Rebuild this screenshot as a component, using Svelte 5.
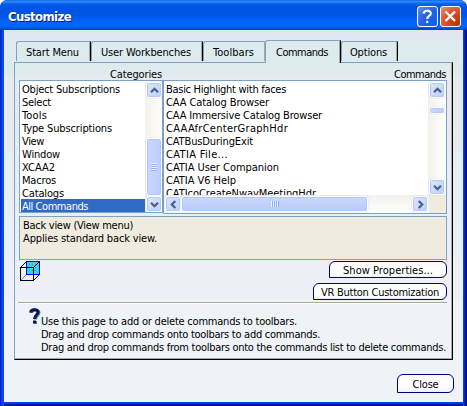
<script>
  const tabs = [
    { label: 'Start Menu', w: 53, box: 75, pad: 9 },
    { label: 'User Workbenches', w: 90, box: 112, pad: 9 },
    { label: 'Toolbars', w: 41, box: 62, pad: 9 },
    { label: 'Commands', w: 52, box: 76, pad: 10, active: true },
    { label: 'Options', w: 37, box: 57, pad: 8 }
  ];
  const categories = [
    ['Object Subscriptions', 98], ['Select', 29], ['Tools', 25], ['Type Subscriptions', 90],
    ['View', 22], ['Window', 38], ['XCAA2', 33], ['Macros', 34], ['Catalogs', 42], ['All Commands', 66]
  ];
  const commands = [
    ['Basic Highlight with faces', 120], ['CAA Catalog Browser', 103],
    ['CAA Immersive Catalog Browser', 156], ['CAAAfrCenterGraphHdr', 122],
    ['CATBusDuringExit', 87], ['CATIA File...', 62], ['CATIA User Companion', 113],
    ['CATIA V6 Help', 70], ['CATIcoCreateNwayMeetingHdr', 150]
  ];
  const help = [
    ['Use this page to add or delete commands to toolbars.', 256],
    ['Drag and drop commands onto toolbars to add commands.', 279],
    ['Drag and drop commands from toolbars onto the commands list to delete commands.', 405]
  ];
  // Spreads the tracking so that a label fills its design width.
  function fit(node, width) {
    const natural = node.getBoundingClientRect().width;
    node.style.letterSpacing = (width - natural) / node.textContent.length + 'px';
  }
  const rotation = { up: 0, right: 90, down: 180, left: 270 };
</script>

{#snippet t(text, w)}<span class="t" use:fit={w}>{text}</span>{/snippet}

{#snippet arrow(dir)}
  <div class="arrow">
    <svg width="9" height="9" viewBox="0 0 9 9"><path d="M1 6.3 4.5 2.8 8 6.3" transform="rotate({rotation[dir]} 4.5 4.5)" fill="none" stroke="#4d6185" stroke-width="2.3" /></svg>
  </div>
{/snippet}

<div class="window">
  <header>
    <span class="title" use:fit={63}>Customize</span>
    <div class="cap">
      <svg width="21" height="21" viewBox="0 0 21 21"><path d="M6.7 7.8C6.7 3.6 13.8 3.8 13.8 7.4 13.8 10 10.2 9.9 10.2 13M10.2 14.7V17" fill="none" stroke="#fff" stroke-width="2.1" /></svg>
    </div>
    <div class="cap red">
      <svg width="21" height="21" viewBox="0 0 21 21"><path d="M5.5 5.5 15 15M15 5.5 5.5 15" fill="none" stroke="#fff" stroke-width="2.3" /></svg>
    </div>
  </header>

  <main>
    <nav>
      {#each tabs as tab}
        <div class="tab" class:active={tab.active} style="width:{tab.box}px;padding-left:{tab.pad}px">{@render t(tab.label, tab.w)}</div>
      {/each}
    </nav>
    <section class="page">
      <div class="heads">{@render t('Categories', 52)}{@render t('Commands', 52)}</div>
      <div class="lists">
        <div class="list cats">
          <div class="rows">
            {#each categories as [name, w], i}
              <div class="row" class:selected={i === 9}>{@render t(name, w)}</div>
            {/each}
          </div>
          <div class="vbar">
            {@render arrow('up')}
            <div class="space"></div>
            <div class="thumb tall"><i class="grip"></i></div>
            {@render arrow('down')}
          </div>
        </div>
        <div class="list cmds">
          <div class="upper">
            <div class="rows">
              {#each commands as [name, w]}
                <div class="row">{@render t(name, w)}</div>
              {/each}
            </div>
            <div class="vbar">
              {@render arrow('up')}
              <div class="gap"></div>
              <div class="thumb short"></div>
              <div class="space"></div>
              {@render arrow('down')}
            </div>
          </div>
          <div class="lower">
            <div class="hbar">
              {@render arrow('left')}
              <div class="thumb wide"><i class="grip side"></i></div>
              <div class="space"></div>
              {@render arrow('right')}
            </div>
          </div>
        </div>
      </div>

      <div class="desc">
        <div>{@render t('Back view (View menu)', 110)}</div>
        <div>{@render t('Applies standard back view.', 134)}</div>
      </div>

      <div class="actions">
        <svg class="cube" width="20" height="20" viewBox="0 0 20 20" shape-rendering="crispEdges">
          <rect x="6.5" y=".5" width="13" height="13" fill="#43cfe3" />
          <path d="M9 3h1v1h-1zM12 3h1v1h-1zM15 3h1v1h-1zM9 6h1v1h-1zM12 6h1v1h-1zM15 6h1v1h-1zM9 9h1v1h-1zM12 9h1v1h-1zM15 9h1v1h-1z" fill="#229bc0" />
          <path d="M1 19 7 13" stroke="#888" />
          <rect x="6.5" y=".5" width="13" height="13" fill="none" stroke="#0000e8" />
          <path d="M.5 6.5h13v13H.5zM1 6 6 1M14 6l5-5M14 19l5-5" fill="none" stroke="#000" />
        </svg>
        <div class="buttons">
          <div class="btn props">{@render t('Show Properties...', 90)}</div>
          <div class="btn vr">{@render t('VR Button Customization', 118)}</div>
        </div>
      </div>
      <div class="rule"></div>
      <div class="help">
        <svg width="12" height="17" viewBox="0 0 12 17">
          <path d="M2.5 5C2.5 1.2 10 1.2 10 4.6 10 7.5 6.5 7.6 6.5 11.5M6.5 13V16" fill="none" stroke="#15a0a4" stroke-width="3" />
          <path d="M1.7 4.5C1.7 .8 9 .8 9 4.1 9 7 5.5 7.1 5.5 11M5.5 12.5V15.6" fill="none" stroke="#1b0c57" stroke-width="3" />
        </svg>
        <div class="lines">
          {#each help as [line, w]}<div>{@render t(line, w)}</div>{/each}
        </div>
      </div>
    </section>
    <footer><div class="btn close">{@render t('Close', 26)}</div></footer>
  </main>
</div>

<style>
  :global(body) { margin: 0; background: #fff; }
  .window, .window :global(*) { box-sizing: border-box; }
  .window {
    width: 467px; height: 406px; overflow: hidden; padding: 0 4px 4px;
    border-radius: 7px 7px 0 0; color: #000;
    font: 11px/13px "DejaVu Sans Condensed", "DejaVu Sans", sans-serif; font-stretch: condensed;
    background: linear-gradient(90deg, #0019b8 0, #0831d9 1px, #0650ef 3px, #0650ef 4px, transparent 4px, transparent 463px, #0046ee 463px, #0040e8 464px, #0016a5 465px, #00138c),
      linear-gradient(#0050ee 0, #0050ee 402px, #0040e8 403px, #00138c 405px);
  }
  .t { display: inline-block; white-space: pre; }
  header {
    height: 30px; margin: 0 -4px; padding: 6px 6px 0 8px; display: flex; gap: 2px;
    border-radius: 7px 7px 0 0;
    background: linear-gradient(#0a50d8 0, #2f8fff 1px, #2583fa 2px, #0560e8 4px, #0054e3 8px, #0054e5 15px, #0062fa 21px, #0067ff 26px, #0055e8 28px, #0040c4 30px);
  }
  .title {
    white-space: pre; font: bold 13px/22px "DejaVu Sans Condensed", sans-serif; font-stretch: condensed;
    color: #fff; text-shadow: 1px 1px #0a1883; margin-right: auto; align-self: flex-start;
  }
  .cap {
    width: 21px; height: 21px; border: 1px solid #fff; border-radius: 3px;
    background: radial-gradient(circle at 90% 90%, #0d60f5, #2963e0 60%, #6e97ee);
  }
  .cap svg { display: block; margin: -1px; }
  .cap.red { background: radial-gradient(circle at 90% 90%, #bd3305, #dd5430 60%, #ec937a); }
  main {
    height: 372px; padding: 10px 10px 0;
    background: linear-gradient(#e1e6ef 0, #e1e8ef 9px, #deebee 10px, #deebee 44px, #e6ebf0 46px, #e9eaf1 120px, #e7eff6 123px, #e7f1f7 226px, #eeeff7 228px, #eeeff7 268px, #eff3f7 270px);
  }
  nav { height: 22px; display: flex; align-items: flex-end; padding-left: 2px; }
  .tab {
    height: 20px; padding-top: 4px; border: 1px solid #7ba2c3; border-right: 1px solid #000;
    border-bottom: 0; border-radius: 3px 0 0 0; box-shadow: inset -1px 0 #aca899;
    background: #deebee; margin-bottom: 1px; flex: none;
  }
  .tab:nth-child(3) { border-right: 1px solid #aca899; box-shadow: none; }
  .tab.active { height: 23px; margin-bottom: -1px; padding-top: 5px; position: relative; }
  .page {
    width: 439px; height: 298px; padding: 5px 4px 0;
    border: 1px solid #7ba2c3; border-right: 1px solid #000; border-bottom: 1px solid #000;
    box-shadow: inset -1px -1px #aca899;
  }
  .heads { height: 12px; display: flex; justify-content: space-between; padding: 0 0 0 91px; width: 427px; }
  .lists { display: flex; width: 428px; height: 134px; align-items: flex-start; }
  .list { background: #fff; border: 1px solid #7ba2c3; overflow: hidden; }
  .cats { width: 144px; height: 133px; display: flex; padding-top: 1px; }
  .cmds { width: 284px; height: 134px; padding: 1px 1px 0; }
  .rows { flex: 1; overflow: hidden; padding-left: 1px; min-width: 0; }
  .row { height: 13px; line-height: 15px; padding-left: 1px; white-space: nowrap; }
  .cmds .rows { padding-left: 0; }
  .selected { background: #316ac5; color: #fff; }
  .upper { display: flex; height: 113px; }
  .vbar { width: 17px; display: flex; flex-direction: column; background: linear-gradient(90deg, #f3f1ec, #fefefb); padding: 0 1px; flex: none; }
  .lower { height: 18px; padding-right: 17px; background: #efebde; margin: 0 -1px; }
  .hbar { height: 18px; display: flex; padding: 1px 1px 1px; background: linear-gradient(#f3f1ec, #fefefb); }
  .arrow, .thumb {
    border: 1px solid #fff; box-shadow: inset 0 0 0 1px #b4c8f6, 0 0 1px #8fabd9; border-radius: 3px;
    background: linear-gradient(135deg, #dce7fd, #bacffb); display: flex; align-items: center; justify-content: center; flex: none;
  }
  .arrow { width: 16px; height: 16px; }
  .space { flex: 1; }
  .thumb { background: linear-gradient(90deg, #cad8fd, #bccdfb); }
  .tall { height: 58px; }
  .gap { height: 9px; }
  .short { height: 7px; }
  .wide { width: 187px; background: linear-gradient(#cad8fd, #b9cbfa); }
  .vbar .thumb { width: 16px; }
  .grip { width: 6px; height: 8px; background: repeating-linear-gradient(#eef4fe 0 1px, #8cb0f8 1px 2px); }
  .side { width: 8px; height: 6px; background: repeating-linear-gradient(90deg, #eef4fe 0 1px, #8cb0f8 1px 2px); }
  .desc { width: 428px; height: 44px; margin-top: 2px; padding: 2px 3px; border: 1px solid #7ba2c3; background: #efebde; }
  .actions { height: 42px; width: 428px; padding-top: 1px; display: flex; justify-content: space-between; }
  .cube { margin: 0 0 0 1px; }
  .buttons { display: flex; flex-direction: column; align-items: flex-end; gap: 5px; }
  .btn {
    height: 17px; border: 1px solid #00007b; border-radius: 6px 6px 6px 0; background: linear-gradient(#f8f8fc, #fff 40%, #fff 70%, #f1f0f8);
    display: flex; justify-content: center; padding-top: 2px;
  }
  .props { width: 118px; }
  .vr { width: 134px; }
  .rule { width: 429px; height: 2px; margin-left: -1px; background: #aca899; border-bottom: 1px solid #fff; }
  .help { display: flex; padding: 4px 0 0 10px; }
  .lines { padding-top: 7px; white-space: nowrap; }
  footer { display: flex; justify-content: flex-end; padding-top: 14px; margin-right: -1px; }
  .close { width: 57px; height: 19px; padding-top: 3px; }
</style>
